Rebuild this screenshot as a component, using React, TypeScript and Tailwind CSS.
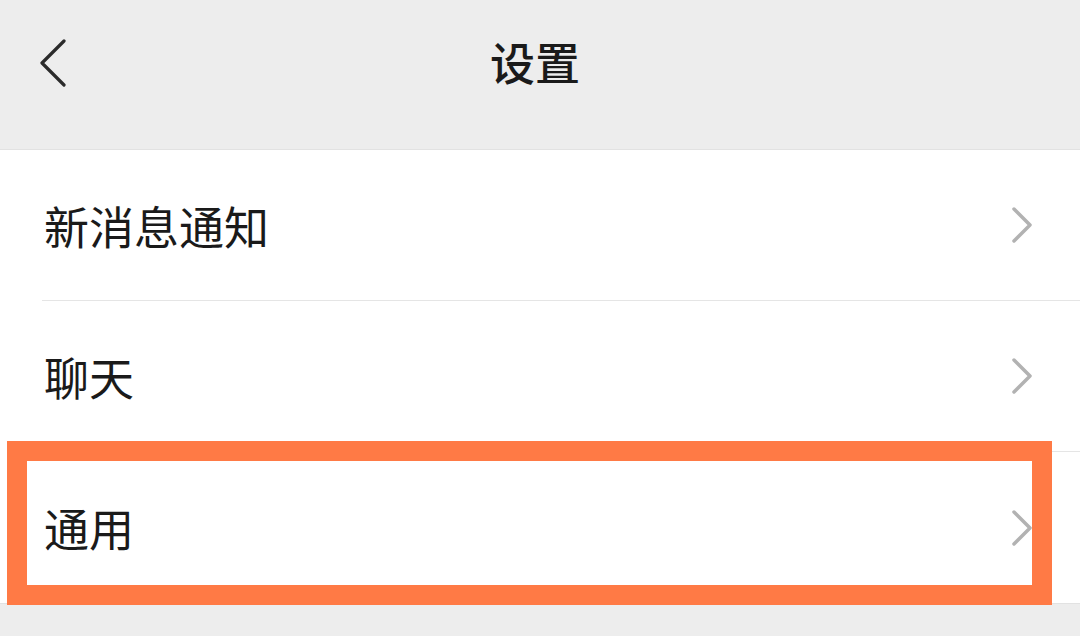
import React from "react";

const rows = ["新消息通知", "聊天", "通用"];

const Chevron = () => (
  <svg width="20" height="36" viewBox="0 0 20 36" fill="none">
    <polyline
      points="2,2 18,18 2,34"
      stroke="#b2b2b2"
      strokeWidth="3.5"
      strokeLinecap="round"
      strokeLinejoin="round"
    />
  </svg>
);

export default function App() {
  return (
    <div className="relative h-[636px] w-[1080px] overflow-hidden bg-[#ededed] font-['Noto_Sans_CJK_SC','Noto_Sans',sans-serif] text-[#1a1a1a]">
      {/* header */}
      <div className="relative flex h-[150px] items-center justify-center border-b border-[#e2e2e2] pb-[26px] pr-[10px]">
        <div className="absolute left-[38px] top-[39px]">
          <svg width="30" height="48" viewBox="0 0 30 48" fill="none">
            <polyline
              points="26,2 4,24 26,46"
              stroke="#2b2b2b"
              strokeWidth="3.2"
              strokeLinecap="round"
              strokeLinejoin="round"
            />
          </svg>
        </div>
        <h1 className="text-[45px] font-medium leading-none">设置</h1>
      </div>

      {/* list */}
      <div className="bg-white border-b border-[#e2e2e2]">
        {rows.map((label, i) => (
          <div key={label} className="pl-[42px]">
            <div
              className={
                i < rows.length - 1
                  ? "flex h-[151px] items-center justify-between border-b border-[#e5e5e5] pr-[48px]"
                  : "flex h-[151px] items-center justify-between pr-[48px]"
              }
            >
              <span className="pl-[2px] text-[45px] leading-none">{label}</span>
              <Chevron />
            </div>
          </div>
        ))}
      </div>

      {/* highlight annotation */}
      <div className="pointer-events-none absolute left-[7px] top-[441px] h-[164px] w-[1045px] border-[20px] border-[#ff7a45]" />
    </div>
  );
}
